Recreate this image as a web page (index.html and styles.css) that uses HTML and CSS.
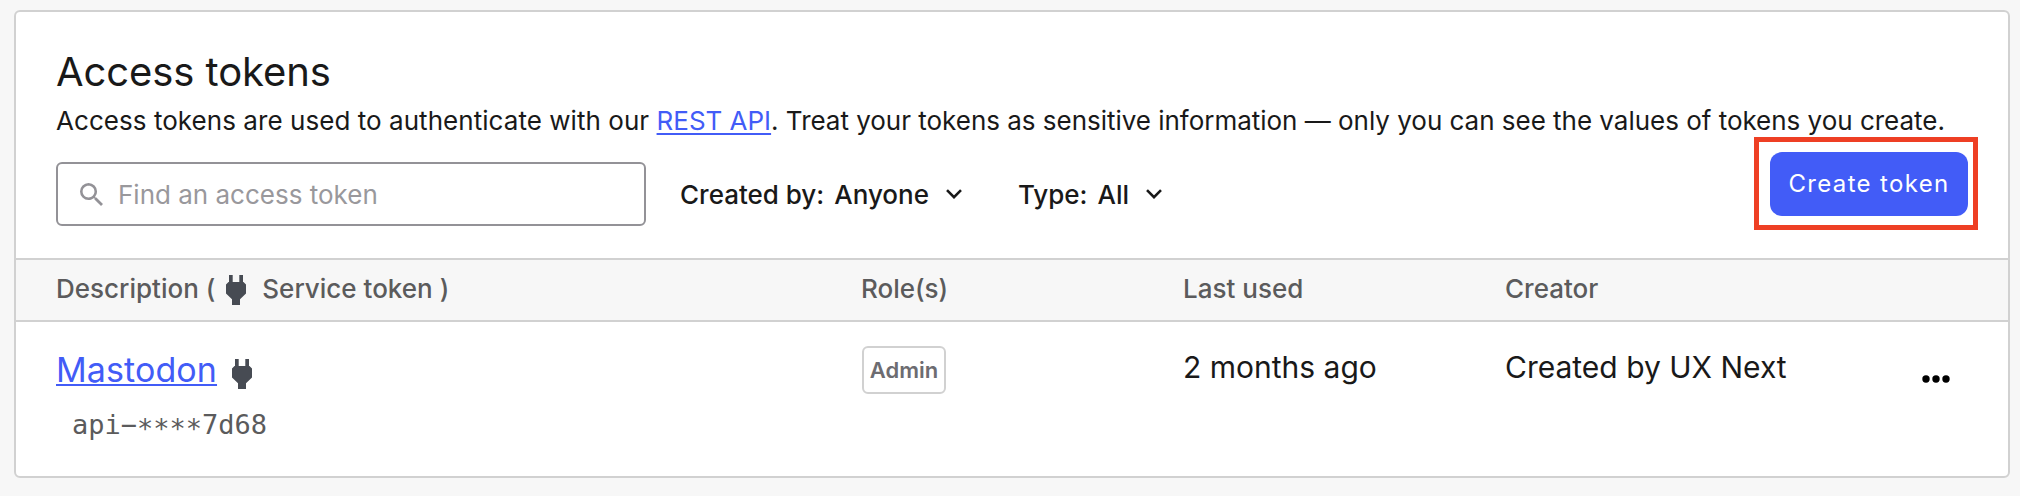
FILE: index.html
```html
<!DOCTYPE html>
<html lang="en">
<head>
<meta charset="utf-8">
<title>Access tokens</title>
<link rel="stylesheet" href="styles.css">
</head>
<body>
<svg class="defs" aria-hidden="true">
  <symbol id="plug" viewBox="0 0 20 30">
    <path d="M3 0h3.700v7h6.600V0H17v7h.500L20 9.500v9L14 24.300V30H6v-5.700L0 18.500v-9L2.500 7H3z"/>
  </symbol>
  <symbol id="chevron" viewBox="0 0 16 10">
    <path d="M1 1.200l7 7 7-7" fill="none" stroke="currentColor" stroke-width="2.600"/>
  </symbol>
</svg>
<main class="card">
  <header class="head">
    <h1 class="title">Access tokens</h1>
    <p class="intro"><span class="intro-lead">Access tokens are used to authenticate with our </span><a class="link" href="#">REST API</a>. Treat your tokens as sensitive information — only you can see the values of tokens you create.</p>
    <div class="toolbar">
      <label class="search">
        <svg class="search-icon" viewBox="3 3 17.5 17.5"><path d="M15.500 14h-.790l-.280-.270A6.471 6.471 0 0 0 16 9.500 6.500 6.500 0 1 0 9.500 16c1.610 0 3.090-.590 4.230-1.570l.270.280v.790l5 4.990L20.490 19l-4.990-5zm-6 0C7.010 14 5 11.990 5 9.500S7.010 5 9.500 5 14 7.010 14 9.500 11.990 14 9.500 14z"/></svg>
        <input class="search-input" type="text" placeholder="Find an access token">
      </label>
      <button class="filter filter-creator"><span class="filter-name">Created by:</span><span class="filter-value">Anyone</span><svg class="chevron"><use href="#chevron"/></svg></button>
      <button class="filter filter-type"><span class="filter-name">Type:</span><span class="filter-value">All</span><svg class="chevron"><use href="#chevron"/></svg></button>
      <div class="highlight"><button class="create">Create token</button></div>
    </div>
  </header>
  <div class="row row-head">
    <div class="legend"><span>Description (</span><svg class="plug"><use href="#plug"/></svg><span>Service token )</span></div>
    <div>Role(s)</div>
    <div>Last used</div>
    <div>Creator</div>
  </div>
  <div class="row row-body">
    <div>
      <div class="name"><a class="link name-link" href="#">Mastodon</a><svg class="plug"><use href="#plug"/></svg></div>
      <code class="key">api−<span class="mask">****</span>7d68</code>
    </div>
    <div><span class="badge">Admin</span></div>
    <div class="cell">2 months ago</div>
    <div class="cell">Created by UX Next</div>
    <button class="more" aria-label="More actions"><svg class="dots" viewBox="0 0 28 8"><circle cx="4" cy="4" r="3.700"/><circle cx="14" cy="4" r="3.700"/><circle cx="24" cy="4" r="3.700"/></svg></button>
  </div>
</main>
</body>
</html>
```
FILE: styles.css
```css
* { box-sizing: border-box; }
body { margin: 0; padding: 10px 10px 18px 14px; background: #f7f7f7; color: #191919; font-family: Inter, "Liberation Sans", sans-serif; }
button { padding: 0; border: 0; background: none; color: inherit; font: inherit; }
.defs { position: absolute; width: 0; height: 0; }
.card { height: 468px; border: 2px solid #d1d1d1; border-radius: 6px; background: #fff; overflow: hidden; }
.head { height: 248px; padding: 34px 30px 0 40px; border-bottom: 2px solid #d1d1d1; }
.title { margin: 0; font-size: 40px; line-height: 52px; font-weight: 400; letter-spacing: -0.08px; }
.intro { margin: 3px 0 0; font-size: 26px; line-height: 40px; letter-spacing: -0.02px; white-space: nowrap; }
.intro-lead { letter-spacing: 0.05px; }
.link { color: #425cf7; text-decoration: underline; text-decoration-thickness: 2px; text-underline-offset: 3px; }
.toolbar { display: flex; align-items: flex-start; margin-top: -4px; }
.search { display: flex; align-items: center; width: 590px; height: 64px; margin-top: 25px; padding-left: 22px; border: 2px solid #939297; border-radius: 6px; color: #939297; }
.search-icon { width: 23px; height: 23px; fill: currentColor; }
.search-input { flex: 1; min-width: 0; margin-left: 15px; padding: 0; border: 0; outline: 0; font: 400 26px Inter, sans-serif; }
.search-input::placeholder { color: #99989c; }
.filter { display: flex; align-items: center; height: 64px; margin-top: 25px; font-size: 26px; font-weight: 500; }
.filter-creator { margin-left: 34px; }
.filter-type { margin-left: 56px; }
.filter-value { margin-left: 10px; }
.chevron { width: 16px; height: 10px; margin-left: 17px; }
.highlight { flex: none; width: 224px; height: 93px; margin-left: auto; padding: 10px 5px 9px 11px; border: 5px solid #ee3f24; }
.create { display: block; width: 198px; height: 64px; padding-bottom: 2px; border-radius: 12px; background: #425cf7; color: #fff; font-size: 24px; font-weight: 430; letter-spacing: 1.35px; }
.row { display: grid; grid-template-columns: 805px 322px 322px 415px 30px; padding-left: 40px; }
.row-head { height: 62px; padding-bottom: 3px; align-items: center; border-bottom: 2px solid #d1d1d1; background: #f7f7f7; color: #5b5b5c; font-size: 26px; font-weight: 500; }
.legend { display: flex; align-items: center; }
.legend .plug { margin: 3px 16px 0 11px; }
.plug { width: 20px; height: 30px; fill: #474b53; }
.row-body { height: 156px; }
.name { display: flex; height: 34px; margin-top: 30px; align-items: center; font-size: 34px; }
.name-link { letter-spacing: 0.1px; text-underline-offset: 2px; }
.name .plug { margin: 10px 0 0 15px; }
.key { display: block; margin: 21px 0 0 16px; color: #5b5b5c; font: 27px/36px "DejaVu Sans Mono", monospace; }
.mask { display: inline-block; transform: translateY(4px); }
.badge { display: flex; align-items: center; justify-content: center; width: 84px; height: 48px; margin: 24px 0 0 1px; border: 2px solid #d1d1d1; border-radius: 6px; color: #6d6c71; font-size: 22px; font-weight: 600; }
.cell { margin-top: 25px; font-size: 30px; line-height: 40px; }
.more { height: 8px; margin: 53px 0 0 2px; }
.dots { display: block; width: 28px; height: 8px; fill: #000; }
```
